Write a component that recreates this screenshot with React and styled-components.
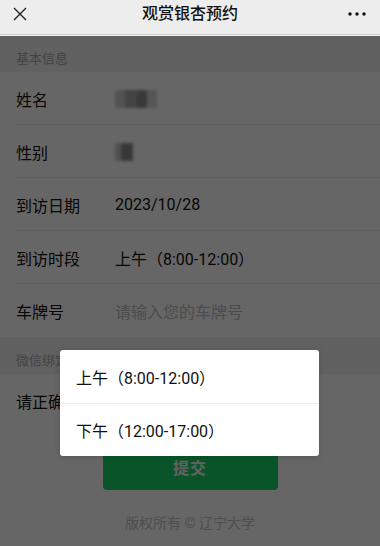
import React from "react";
import styled, { createGlobalStyle } from "styled-components";

const GlobalStyle = createGlobalStyle`
  html, body {
    margin: 0;
    padding: 0;
    background: #ffffff;
  }
  body {
    font-family: Roboto, "Noto Sans CJK SC", "Noto Sans", sans-serif;
    color: #1a1a1a;
  }
  * {
    box-sizing: border-box;
  }
`;

const StyledPage = styled.div`
  width: 380px;
  height: 546px;
  overflow: hidden;
  position: relative;
  background: #ffffff;
`;

const StyledNavBar = styled.div`
  height: 35px;
  padding: 0 14px 7px 13px;
  display: flex;
  align-items: center;
  justify-content: space-between;
  background: #ededed;
  border-bottom: 1px solid #cfcfcf;
  position: relative;
  z-index: 3;
`;

const StyledNavTitle = styled.div`
  position: absolute;
  left: 0;
  right: 0;
  top: 0;
  height: 28px;
  line-height: 28px;
  text-align: center;
  font-size: 16px;
  font-weight: 500;
  color: #111;
  pointer-events: none;
`;

const StyledNavIcon = styled.svg`
  display: block;
  position: relative;
  z-index: 1;
`;

const StyledSectionTitle = styled.div`
  padding: 16px 16px 6px;
  font-size: 13px;
  line-height: 15px;
  color: #a8a8a8;
  background: #f3f3f3;
`;

const StyledCells = styled.div`
  background: #ffffff;
`;

const StyledCell = styled.div`
  height: 53px;
  display: flex;
  align-items: center;
  padding-left: 16px;
  position: relative;
  &:not(:last-child)::after {
    content: "";
    position: absolute;
    left: 16px;
    right: 0;
    bottom: 0;
    height: 1px;
    background: #ececec;
  }
`;

const StyledLabel = styled.div`
  width: 99px;
  flex-shrink: 0;
  font-size: 16px;
  color: #111;
`;

const StyledValue = styled.div`
  font-size: 16px;
  color: ${(p) => (p.$placeholder ? "#bdbdbd" : "#111")};
`;

const StyledMosaic = styled.div`
  display: flex;
  align-items: center;
  height: 20px;
  filter: blur(1.6px);
  span {
    display: block;
    height: 18px;
  }
`;

const StyledButtonWrap = styled.div`
  display: flex;
  justify-content: center;
  padding-top: 17px;
`;

const StyledSubmit = styled.div`
  width: 175px;
  height: 46px;
  border-radius: 4px;
  background: #17d468;
  color: #f4f4f4;
  font-size: 16px;
  font-weight: 700;
  display: flex;
  align-items: center;
  justify-content: center;
  letter-spacing: 1px;
`;

const StyledFooter = styled.div`
  text-align: center;
  font-size: 14px;
  color: #c4c4c4;
  padding-top: 22px;
`;

const StyledMask = styled.div`
  position: absolute;
  left: 0;
  right: 0;
  top: 36px;
  bottom: 0;
  background: rgba(0, 0, 0, 0.6);
  z-index: 2;
`;

const StyledSheet = styled.div`
  position: absolute;
  left: 60px;
  top: 350px;
  width: 259px;
  background: #ffffff;
  border-radius: 3px;
  box-shadow: 0 1px 6px rgba(0, 0, 0, 0.15);
  z-index: 4;
  overflow: hidden;
`;

const StyledOption = styled.div`
  height: 53px;
  display: flex;
  align-items: center;
  padding-left: 16px;
  font-size: 16px;
  color: #111;
  & + & {
    border-top: 1px solid #ebebeb;
  }
`;

const rows = [
  { label: "到访日期", value: "2023/10/28" },
  { label: "到访时段", value: "上午（8:00-12:00）" },
  { label: "车牌号", value: "请输入您的车牌号", placeholder: true },
];

const options = ["上午（8:00-12:00）", "下午（12:00-17:00）"];

export default function App() {
  return (
    <StyledPage>
      <GlobalStyle />
      <StyledNavBar>
        <StyledNavIcon width="14" height="14" viewBox="0 0 14 14">
          <path d="M1 1 L13 13 M13 1 L1 13" stroke="#222" strokeWidth="1.4" fill="none" />
        </StyledNavIcon>
        <StyledNavTitle>观赏银杏预约</StyledNavTitle>
        <StyledNavIcon width="18" height="4" viewBox="0 0 18 4">
          <circle cx="2" cy="2" r="1.7" fill="#111" />
          <circle cx="9" cy="2" r="1.7" fill="#111" />
          <circle cx="16" cy="2" r="1.7" fill="#111" />
        </StyledNavIcon>
      </StyledNavBar>

      <StyledSectionTitle>基本信息</StyledSectionTitle>
      <StyledCells>
        <StyledCell>
          <StyledLabel>姓名</StyledLabel>
          <StyledMosaic>
            <span style={{ width: 10, background: "#cfcfcf" }} />
            <span style={{ width: 12, background: "#a9a9a9" }} />
            <span style={{ width: 10, background: "#8f8f8f" }} />
            <span style={{ width: 10, background: "#d6d6d6" }} />
          </StyledMosaic>
        </StyledCell>
        <StyledCell>
          <StyledLabel>性别</StyledLabel>
          <StyledMosaic>
            <span style={{ width: 6, background: "#c7c7c7" }} />
            <span style={{ width: 12, background: "#8c8c8c" }} />
          </StyledMosaic>
        </StyledCell>
        {rows.map((r) => (
          <StyledCell key={r.label}>
            <StyledLabel>{r.label}</StyledLabel>
            <StyledValue $placeholder={r.placeholder}>{r.value}</StyledValue>
          </StyledCell>
        ))}
      </StyledCells>

      <StyledSectionTitle>微信绑定</StyledSectionTitle>
      <StyledCells>
        <StyledCell>
          <StyledLabel style={{ width: "auto" }}>请正确填写微信绑定的手机号</StyledLabel>
        </StyledCell>
      </StyledCells>

      <StyledButtonWrap>
        <StyledSubmit>提交</StyledSubmit>
      </StyledButtonWrap>
      <StyledFooter>版权所有 © 辽宁大学</StyledFooter>

      <StyledMask />
      <StyledSheet>
        {options.map((o) => (
          <StyledOption key={o}>{o}</StyledOption>
        ))}
      </StyledSheet>
    </StyledPage>
  );
}
